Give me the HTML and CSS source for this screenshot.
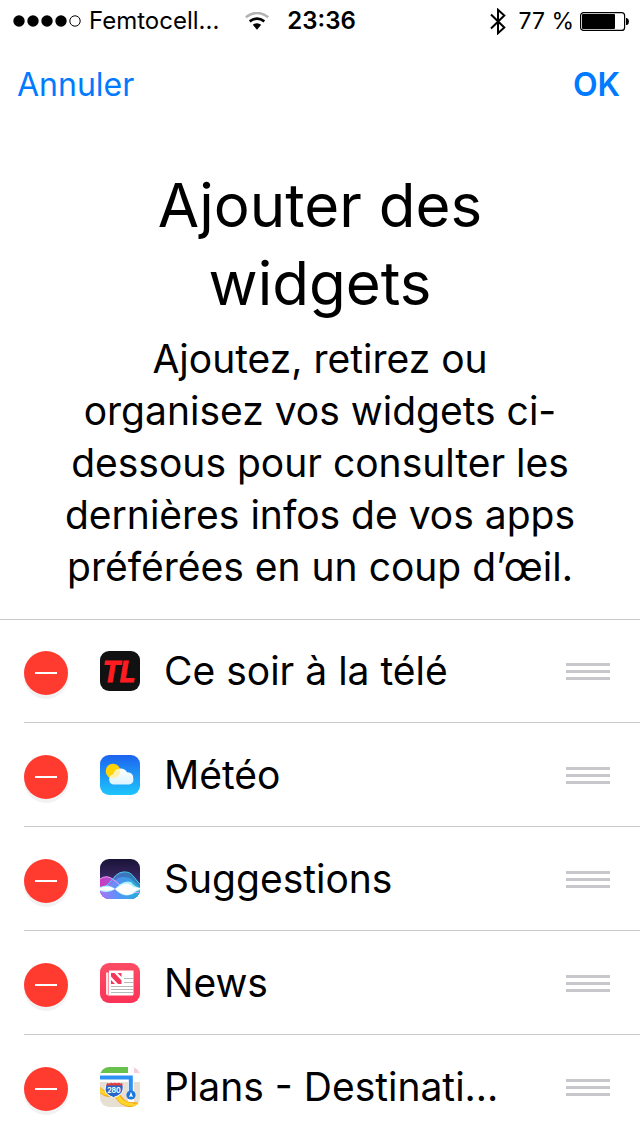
FILE: index.html
```
<!DOCTYPE html>
<html lang="fr">
<head>
<meta charset="utf-8">
<meta name="viewport" content="width=device-width">
<title>Ajouter des widgets</title>
<link rel="stylesheet" href="styles.css">
</head>
<body>
<header>
  <div class="status">
    <div class="carrier">
      <svg width="68" height="14" viewBox="0 0 68 14" aria-hidden="true"><circle cx="6" cy="7" r="5.7"/><circle cx="20" cy="7" r="5.7"/><circle cx="34" cy="7" r="5.7"/><circle cx="48" cy="7" r="5.7"/><circle cx="62" cy="7" r="5.2" fill="none" stroke="#000"/></svg>
      <span>Femtocell...</span>
      <svg class="wifi" width="24" height="18" viewBox="0 0 24 18" aria-hidden="true"><path d="M.8 5.3Q12-3.3 23.2 5.3" fill="none" stroke="#b3b3b3" stroke-width="2.6"/><path d="M4.7 9.4Q12 3.8 19.3 9.4" fill="none" stroke="#000" stroke-width="2.7"/><path d="M7.8 12.8Q12 9.6 16.2 12.8L12 17.8Z"/></svg>
    </div>
    <time>23:36</time>
    <div class="power">
      <svg class="bluetooth" width="16" height="27" viewBox="0 0 16 27" aria-hidden="true"><path d="M1 6.5 14.3 19.5 8 25.2V1.8L14.3 7.5 1 20.5" fill="none" stroke="#000" stroke-width="2"/></svg>
      <span>77 %</span>
      <svg width="50" height="19" viewBox="0 0 50 19" aria-hidden="true"><rect x=".6" y=".6" width="44" height="17.8" rx="3" fill="#fff" stroke="#000" stroke-width="1.2"/><rect x="2" y="2" width="33" height="15" rx="1"/><path d="M46 6h1q2 1 2 3.500t-2 3.500h-1z"/></svg>
    </div>
  </div>
  <nav class="bar">
    <button type="button">Annuler</button>
    <button type="button" class="done">OK</button>
  </nav>
</header>
<main>
  <section class="intro">
    <h1>Ajouter des<br>widgets</h1>
    <p>Ajoutez, retirez ou<br>organisez vos widgets ci-<br>dessous pour consulter les<br>dernières infos de vos apps<br>préférées en un coup d’œil.</p>
  </section>
  <ul class="widgets">
    <li class="row">
      <button type="button" class="remove" aria-label="Retirer Ce soir à la télé"></button>
      <svg class="app" viewBox="0 0 40 40" aria-hidden="true"><rect width="40" height="40" rx="9" fill="#111"/><text x="19" y="31" class="tl">TL</text></svg>
      <span class="name">Ce soir à la télé</span>
      <button type="button" class="grip" aria-label="Déplacer Ce soir à la télé"><i></i><i></i><i></i></button>
    </li>
    <li class="row">
      <button type="button" class="remove" aria-label="Retirer Météo"></button>
      <svg class="app" viewBox="0 0 40 40" aria-hidden="true">
        <defs><linearGradient id="sky" x2="0" y2="1"><stop stop-color="#1d64f0"/><stop offset="1" stop-color="#1dc6fc"/></linearGradient><linearGradient id="cloud" x2="0" y2="1"><stop stop-color="#fff"/><stop offset="1" stop-color="#dcf3fe"/></linearGradient><clipPath id="cloudclip"><path d="M14 29.500a5 5 0 0 1-.8-9.900 7.500 7.500 0 0 1 13.800-2.400 5.700 5.700 0 0 1 6.300 6.800 4.500 4.500 0 0 1-4.300 5.500z"/></clipPath></defs>
        <rect width="40" height="40" rx="9" fill="url(#sky)"/><circle cx="13" cy="16" r="7.300" fill="#ffd305"/>
        <path d="M14 29.500a5 5 0 0 1-.8-9.900 7.500 7.500 0 0 1 13.800-2.400 5.700 5.700 0 0 1 6.300 6.800 4.500 4.500 0 0 1-4.300 5.500z" fill="url(#cloud)"/><circle cx="13" cy="16" r="7.300" fill="#fff0ad" clip-path="url(#cloudclip)"/>
      </svg>
      <span class="name">Météo</span>
      <button type="button" class="grip" aria-label="Déplacer Météo"><i></i><i></i><i></i></button>
    </li>
    <li class="row">
      <button type="button" class="remove" aria-label="Retirer Suggestions"></button>
      <svg class="app" viewBox="0 0 40 40" aria-hidden="true">
        <defs><clipPath id="tile"><rect width="40" height="40" rx="9"/></clipPath><linearGradient id="night" x2="0" y2="1"><stop stop-color="#1a1438"/><stop offset=".35" stop-color="#302155"/><stop offset="1" stop-color="#4f43a8"/></linearGradient><linearGradient id="pink" x2="1" y2="0"><stop stop-color="#e43dcd"/><stop offset=".55" stop-color="#9c6df4"/><stop offset="1" stop-color="#346bea"/></linearGradient><linearGradient id="cyan" x2="1" y2="0"><stop stop-color="#a878fa"/><stop offset=".5" stop-color="#4b9cfa"/><stop offset="1" stop-color="#25b3d5"/></linearGradient></defs>
        <g clip-path="url(#tile)"><path d="M0 0h40v40H0z" fill="url(#night)"/>
        <path d="M0 20Q7 15 14 21T25 30Q32 35 40 33V40H0z" fill="url(#pink)" opacity=".85"/>
        <path d="M0 29C10 29 13 13 23 13S34 20 40 25V40H0z" fill="url(#cyan)" opacity=".65"/>
        <path d="M0 31C11 30 14 18 23 18S34 23 40 28V40H0z" fill="url(#cyan)" opacity=".8"/>
        <path d="M0 20Q7 15 14 21T25 30Q33 35 40 33" fill="none" stroke="#f29af6" stroke-width="1"/>
        <path d="M0 29C10 29 13 14 23 13S34 20 40 25" fill="none" stroke="#48d0f0" stroke-width="1"/>
        <path d="M0 28Q9 24 15 30C20 24 26 21 31 23Q35 28 40 29V31Q36 32 33 35C26 38 20 36 15 30Q9 35 0 32z" fill="#a6efff"/>
        <path d="M0 29Q9 26 15 30Q9 33 0 31zM15 30Q27 20 33 28L40 29V30L35 32Q32 36 26 36Q20 35 15 30" fill="#fff"/></g>
      </svg>
      <span class="name">Suggestions</span>
      <button type="button" class="grip" aria-label="Déplacer Suggestions"><i></i><i></i><i></i></button>
    </li>
    <li class="row">
      <button type="button" class="remove" aria-label="Retirer News"></button>
      <svg class="app" viewBox="0 0 40 40" aria-hidden="true">
        <defs><linearGradient id="red" x2="0" y2="1"><stop stop-color="#fc4d64"/><stop offset="1" stop-color="#fa3257"/></linearGradient></defs>
        <rect width="40" height="40" rx="9" fill="url(#red)"/><path d="M6 9.500h2.500V32H7.500Q6 32 6 30.500z" fill="#fde3e7"/><path d="M9 7.500h24.500V31q0 1.500-1.500 1.500H7.500Q9 32 9 30.500z" fill="#fff"/>
        <path d="M11 10h3.500l7 7.500V21h-3.500L11 13.500zM17.500 10h4v4zM11 17v4h4z" fill="#f5365b"/>
        <path d="M24 15.500h9.500M24 19.500h9.500M11 23.500h22.500M11 26.500h22.500M11 29.500h22.500" stroke="#b8b8bb"/>
      </svg>
      <span class="name">News</span>
      <button type="button" class="grip" aria-label="Déplacer News"><i></i><i></i><i></i></button>
    </li>
    <li class="row">
      <button type="button" class="remove" aria-label="Retirer Plans - Destination"></button>
      <svg class="app" viewBox="0 0 40 40" aria-hidden="true">
        <g clip-path="url(#tile)"><path d="M0 0h40v40H0z" fill="#e6dfd2"/><path d="M0 0h28v7H0z" fill="#67c14c"/><path d="M34 0h6v7h-6z" fill="#f5cdd6"/><path d="M28 0h6v40h-6zM0 6h40v9H0z" fill="#fff"/>
        <path d="M0 20C10 29 16 21 23 31Q27 36 34 35L40 36V40H28Q20 38 17 33C12 26 9 34 0 26z" fill="#f4ac19"/><path d="M0 21C10 30 16 22 22 32Q27 37 40 37V39H29Q21 38 18 33C12 25 8 32 0 25z" fill="#ffd52c"/>
        <path d="M0 10.500h30.800V28" fill="none" stroke="#2e91f5" stroke-width="4"/><circle cx="31" cy="28" r="4.600" fill="#1876de"/><path d="m31 24.800 2 5.400-2-1-2 1z" fill="#fff"/>
        <path d="M7 16q3 1 4-.5 2.500 1.500 4 0 1.500 1.500 4 0 1 1.500 3 .5 2 4 1 7-1 5-9.500 7.500Q6 28 5 23q0-4 2-7z" fill="#2665c9" stroke="#fff"/><path d="M7 16q3 1 4-.5 2.500 1.500 4 0 1.500 1.500 4 0 1 1.500 3 .5l1 2.500H6z" fill="#df4141"/><text x="14" y="25.500" class="route">280</text></g>
      </svg>
      <span class="name">Plans - Destinati...</span>
      <button type="button" class="grip" aria-label="Déplacer Plans - Destination"><i></i><i></i><i></i></button>
    </li>
  </ul>
</main>
</body>
</html>
```
FILE: styles.css
```
* { box-sizing: border-box; }
body { margin: 0; background: #fff; color: #000; font-family: Inter, Roboto, sans-serif; }
button { margin: 0; padding: 0; border: 0; background: none; color: inherit; font: inherit; }
svg { display: block; flex: none; }
.status { display: grid; grid-template-columns: 1fr auto 1fr; align-items: center; height: 42px; padding: 0 10px 0 13px; font-size: 24px; line-height: 40px; }
.carrier, .power { display: flex; align-items: center; gap: 8px; white-space: nowrap; }
.wifi { margin-left: auto; margin-right: 18px; }
.power { justify-content: flex-end; gap: 6px; font-size: 23px; }
.bluetooth { margin-right: 6px; }
.status time { font-weight: 600; }
.bar { display: flex; justify-content: space-between; align-items: center; height: 86px; padding: 0 20px 0 17px; color: #007aff; font-size: 32px; line-height: 40px; }
.done { font-weight: 600; }
.intro { padding: 38px 20px 26px; border-bottom: 1px solid #c8c7cc; text-align: center; }
h1 { margin: 0; font-size: 60px; line-height: 78px; font-weight: 400; }
p { margin: 11px 0 0; font-size: 39px; line-height: 52px; }
.widgets { margin: 0; padding: 0 0 0 24px; list-style: none; }
.row { display: flex; align-items: flex-start; padding: 32px 30px 27px 0; border-bottom: 1px solid #c8c7cc; }
.row:first-child { padding-top: 31px; }
.row:last-child { padding-bottom: 20px; border-bottom: 0; }
.remove { display: grid; place-items: center; flex: none; width: 44px; height: 44px; border-radius: 50%; background: #ff3b30; box-shadow: 0 4px 1px #f2f2f2; }
.remove::before { content: ""; width: 22px; height: 2px; background: #fff; }
.app { width: 40px; height: 40px; margin: 0 24px 0 32px; }
.name { flex: 1; font-size: 39px; line-height: 40px; white-space: nowrap; }
.grip { display: grid; align-content: center; gap: 4px; flex: none; width: 44px; height: 40px; }
.grip i { height: 3px; background: #c7c7cc; }
.tl { fill: #ff1c20; stroke: #ff1c20; font: italic 700 29px "Liberation Sans Narrow", Roboto, sans-serif; text-anchor: middle; }
.route { fill: #fff; font: 700 7px Inter, sans-serif; text-anchor: middle; }
```
